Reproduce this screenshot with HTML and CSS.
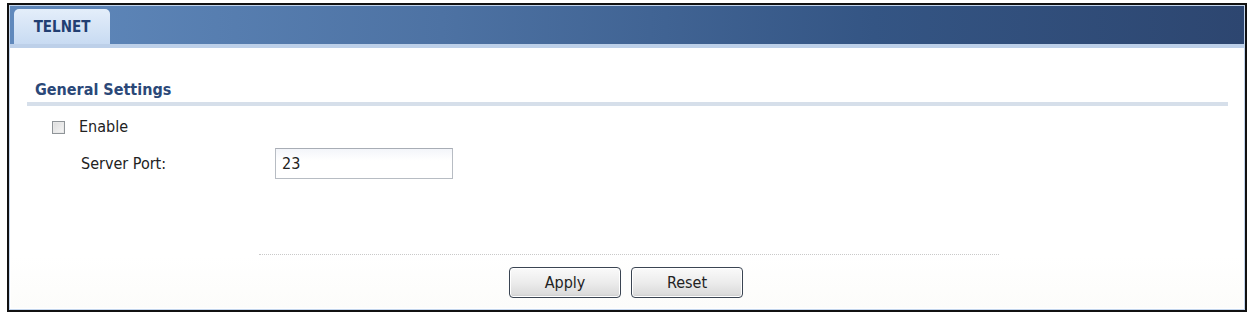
FILE: index.html
```html
<!DOCTYPE html>
<html lang="en">
<head>
    <meta charset="UTF-8">
    <title>TELNET</title>
    <link rel="stylesheet" href="styles.css">
</head>
<body>
    <div class="frame">
        <div class="tab-bar">
            <div class="tab">TELNET</div>
        </div>
        <div class="tab-strip"></div>
        <div class="content">
            <h2 class="section-title">General Settings</h2>
            <div class="row check-row">
                <span class="checkbox"></span>
                <label>Enable</label>
            </div>
            <div class="row port-row">
                <label class="field-label">Server Port:</label>
                <input type="text" class="text-input" value="23">
            </div>
            <div class="separator"></div>
            <div class="buttons">
                <button class="btn">Apply</button>
                <button class="btn">Reset</button>
            </div>
        </div>
    </div>
</body>
</html>
```

FILE: styles.css
```css
body {
    margin: 0;
    background: #fff;
    font-family: "DejaVu Sans Condensed", "DejaVu Sans", sans-serif;
    font-size: 16px;
    line-height: 18px;
    color: #222;
}
.frame {
    margin: 3px 0 0 7px;
    width: 1236px;
    height: 305px;
    border: 2px solid #111;
    box-shadow: inset 0 0 0 1px #c3d5ec;
    display: flex;
    flex-direction: column;
}
.tab-bar {
    height: 38px;
    margin: 1px 1px 0 1px;
    background: linear-gradient(to right, #6089bc 0%, #4d72a3 35%, #345584 70%, #2d4670 100%);
    display: flex;
    align-items: flex-end;
    padding-left: 4px;
}
.tab {
    width: 96px;
    height: 35px;
    border-radius: 5px 5px 0 0;
    background: linear-gradient(to bottom, #e4eefa, #c8dbf2);
    color: #223f72;
    font-weight: bold;
    font-size: 15px;
    display: flex;
    align-items: center;
    justify-content: center;
}
.tab-strip {
    height: 4px;
    margin: 0 1px;
    background: #bdd0e9;
}
.content {
    flex: 1;
    margin: 0 2px 2px 2px;
    background: linear-gradient(to bottom, #fff 80%, #fcfcfa);
    padding: 0 15px 0 16px;
}
.section-title {
    margin: 33px 0 0 0;
    padding: 0 0 3px 8px;
    font-size: 16px;
    line-height: 18px;
    font-weight: bold;
    color: #2b4878;
    border-bottom: 4px solid #d6dfea;
}
.row {
    display: flex;
    align-items: center;
}
.check-row {
    margin: 12px 0 0 25px;
}
.checkbox {
    width: 11px;
    height: 11px;
    border: 1px solid #8f9498;
    background: linear-gradient(135deg, #dcdcdc, #f6f6f6);
    box-shadow: inset 0 0 0 1px #e8e8e8;
    margin-right: 14px;
}
.port-row {
    margin: 12px 0 0 54px;
}
.field-label {
    width: 194px;
}
.text-input {
    width: 178px;
    height: 31px;
    box-sizing: border-box;
    border: 1px solid #b7bcc3;
    border-top-color: #a8adb5;
    padding: 0 6px;
    font-family: "DejaVu Sans Condensed", "DejaVu Sans", sans-serif;
    font-size: 16px;
    color: #222;
    background: linear-gradient(to bottom, #f3f5fa, #fff 40%);
}
.separator {
    margin: 75px 0 0 232px;
    width: 740px;
    border-top: 1px dotted #c9c9c9;
}
.buttons {
    display: flex;
    justify-content: center;
    gap: 10px;
    margin-top: 12px;
    padding-right: 3px;
}
.btn {
    width: 112px;
    height: 31px;
    border: 1px solid #3a4452;
    border-radius: 4px;
    background: linear-gradient(to bottom, #fafafa 0%, #ececec 50%, #dcdcdc 90%, #c8c8c8 100%);
    box-shadow: inset 0 0 0 1px #fff;
    font-family: "DejaVu Sans Condensed", "DejaVu Sans", sans-serif;
    font-size: 16px;
    color: #222;
}
```
